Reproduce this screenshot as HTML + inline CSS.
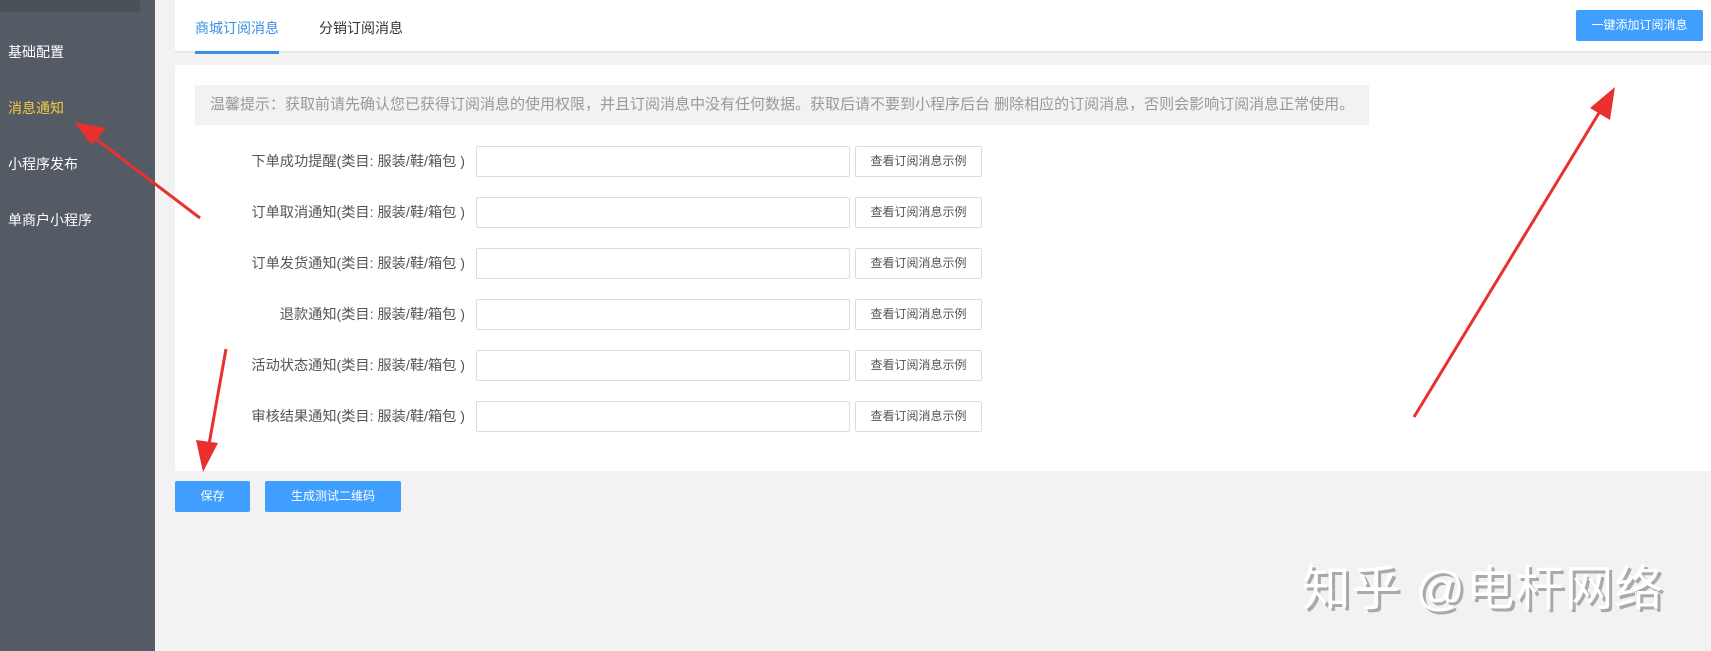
<!DOCTYPE html>
<html><head><meta charset="utf-8"><style>
*{margin:0;padding:0;box-sizing:border-box}
body{width:1711px;height:651px;overflow:hidden;background:#f2f2f2;font-family:"Liberation Sans","Noto Sans CJK SC",sans-serif;position:relative}
.side{position:absolute;left:0;top:0;width:155px;height:651px;background:#545b64}
.side .top{position:absolute;left:0;top:0;width:140px;height:12px;background:#4a5058}
.side .it{position:absolute;left:8px;color:#fff;font-size:14px}
.tabbar{position:absolute;left:175px;top:0;width:1536px;height:53px;background:#fff;border-bottom:2px solid #e6e6e6}
.tab{position:absolute;top:18px;font-size:14px;color:#333}
.content{position:absolute;left:175px;top:65px;width:1536px;height:406px;background:#fff}
.notice{position:absolute;left:195px;top:85px;width:1174px;height:40px;background:#f2f2f2;color:#999;font-size:15px;line-height:40px;padding-left:15px;white-space:nowrap}
.lbl{position:absolute;right:1246px;font-size:14.2px;color:#555;text-align:right;white-space:nowrap}
.inp{position:absolute;left:476px;width:374px;height:31px;border:1px solid #ddd;border-radius:2px;background:#fff}
.bt{position:absolute;left:855px;width:127px;height:31px;border:1px solid #ddd;border-radius:2px;background:#fff;font-size:12px;color:#555;text-align:center;line-height:29px}
.blue{position:absolute;background:#409eff;color:#fff;font-size:12px;text-align:center;border-radius:2px}
.wm{position:absolute;left:1302px;top:549px;font-size:48.5px;color:#fff;text-shadow:3px 3px 0 #a9a9a9;letter-spacing:1px;white-space:nowrap}
</style></head><body>
<div class="side"><div class="top"></div>
<div class="it" style="top:42px">基础配置</div>
<div class="it" style="top:98px;color:#f5c84a">消息通知</div>
<div class="it" style="top:154px">小程序发布</div>
<div class="it" style="top:210px">单商户小程序</div>
</div>
<div class="tabbar">
<div class="tab" style="left:20px;color:#3a8ee6">商城订阅消息</div>
<div style="position:absolute;left:20px;top:51px;width:84px;height:3px;background:#3a8ee6"></div>
<div class="tab" style="left:144px">分销订阅消息</div>
</div>
<div class="blue" style="left:1576px;top:10px;width:127px;height:31px;line-height:31px">一键添加订阅消息</div>
<div class="content"></div>
<div class="notice">温馨提示：获取前请先确认您已获得订阅消息的使用权限，并且订阅消息中没有任何数据。获取后请不要到小程序后台 删除相应的订阅消息，否则会影响订阅消息正常使用。</div>

<div class="lbl" style="top:151px">下单成功提醒(类目: 服装/鞋/箱包 )</div><div class="inp" style="top:146px"></div><div class="bt" style="top:146px">查看订阅消息示例</div>
<div class="lbl" style="top:202px">订单取消通知(类目: 服装/鞋/箱包 )</div><div class="inp" style="top:197px"></div><div class="bt" style="top:197px">查看订阅消息示例</div>
<div class="lbl" style="top:253px">订单发货通知(类目: 服装/鞋/箱包 )</div><div class="inp" style="top:248px"></div><div class="bt" style="top:248px">查看订阅消息示例</div>
<div class="lbl" style="top:304px">退款通知(类目: 服装/鞋/箱包 )</div><div class="inp" style="top:299px"></div><div class="bt" style="top:299px">查看订阅消息示例</div>
<div class="lbl" style="top:355px">活动状态通知(类目: 服装/鞋/箱包 )</div><div class="inp" style="top:350px"></div><div class="bt" style="top:350px">查看订阅消息示例</div>
<div class="lbl" style="top:406px">审核结果通知(类目: 服装/鞋/箱包 )</div><div class="inp" style="top:401px"></div><div class="bt" style="top:401px">查看订阅消息示例</div>

<div class="blue" style="left:175px;top:481px;width:75px;height:31px;line-height:31px">保存</div>
<div class="blue" style="left:265px;top:481px;width:136px;height:31px;line-height:31px">生成测试二维码</div>
<div class="wm">知乎 @电杆网络</div>
<svg width="1711" height="651" style="position:absolute;left:0;top:0" fill="#e8302f" stroke="#e8302f">
<line x1="200" y1="218" x2="92" y2="136" stroke-width="3"/>
<polygon points="74,122 106,128 92,145" stroke="none"/>
<line x1="226" y1="349" x2="208" y2="450" stroke-width="3"/>
<polygon points="203,472 196,440 218,443" stroke="none"/>
<line x1="1414" y1="417" x2="1602" y2="108" stroke-width="3"/>
<polygon points="1615,87 1610,120 1590,108" stroke="none"/>
</svg>
</body></html>
